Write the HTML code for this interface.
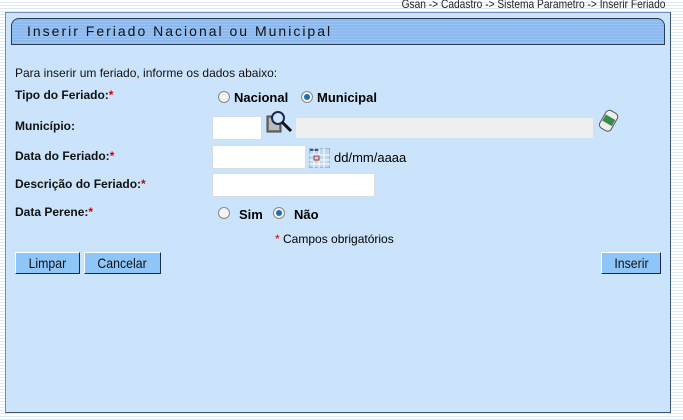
<!DOCTYPE html>
<html><head><style>
body{margin:0;width:683px;height:420px;overflow:hidden;font-family:"Liberation Sans",sans-serif;font-size:12px;
background:repeating-linear-gradient(to bottom,#fff 0,#fff 2px,#dce9f7 2px,#dce9f7 3px);position:relative}
.a{position:absolute}
.bc{right:18px;top:-3px;font-size:12px;color:#222;transform:scaleX(.85);transform-origin:right}
.panel{left:5px;top:12px;width:664px;height:399px;background:#cbe4fc;border:1px solid #6f8fb0;border-right-color:#3a5570;border-bottom-color:#3a5570}
.hdr{left:11px;top:18px;width:652px;height:25px;border:1px solid #2c3c50;border-radius:8px 8px 0 0;
background:repeating-linear-gradient(to bottom,#8cbaf0 0,#8cbaf0 2px,#9ac4f4 2px,#9ac4f4 3px)}
.hdr span{position:absolute;left:15px;top:4px;font-size:14px;letter-spacing:2px;color:#111}
.l{left:15px;font-weight:bold;color:#111}
.r{color:#c00}
.in{background:#fff;border:1px solid #d8dde3;border-radius:2px;height:22px}
.rad{width:10px;height:10px;border-radius:50%;border:1px solid #888;background:#f4f4f4}
.rad.on::after{content:"";position:absolute;left:2px;top:2px;width:6px;height:6px;border-radius:50%;background:#1a6fb0}
.btn{background:#8fc6fa;border:1px solid #fff;border-right-color:#1a2a4a;border-bottom-color:#1a2a4a;height:20px;line-height:20px;text-align:center;font-size:14px;color:#111}
.btn span{display:inline-block;transform:scaleX(.88)}
</style></head><body>
<div class="a bc">Gsan -&gt; Cadastro -&gt; Sistema Parametro -&gt; Inserir Feriado</div>
<div class="a panel"></div>
<div class="a hdr"><span>Inserir Feriado Nacional ou Municipal</span></div>
<div class="a" style="left:15px;top:66px;color:#111">Para inserir um feriado, informe os dados abaixo:</div>
<div class="a l" style="top:88px">Tipo do Feriado:<span class="r">*</span></div>
<div class="a rad" style="left:218px;top:91px"></div>
<div class="a" style="left:234px;top:90px;font-weight:bold;font-size:13px">Nacional</div>
<div class="a rad on" style="left:301px;top:91px"></div>
<div class="a" style="left:317px;top:90px;font-weight:bold;font-size:13px">Municipal</div>
<div class="a l" style="top:119px">Município:</div>
<div class="a in" style="left:212px;top:116px;width:48px"></div>
<svg class="a" style="left:266px;top:110px" width="27" height="26" viewBox="0 0 27 26"><rect x="1" y="6" width="14" height="16" fill="#777" stroke="#444"/><rect x="3" y="8" width="10" height="12" fill="#bbb"/><circle cx="12" cy="8" r="6" fill="#cfe4ff" stroke="#1a2a55" stroke-width="2"/><line x1="16" y1="12" x2="25" y2="21" stroke="#111" stroke-width="3"/></svg>
<div class="a" style="left:296px;top:118px;width:297px;height:20px;background:#efefef"></div>
<svg class="a" style="left:597px;top:109px" width="24" height="24" viewBox="0 0 24 24"><g transform="rotate(30 12 12)"><rect x="5" y="2" width="13" height="20" rx="4" fill="#eee" stroke="#555"/><rect x="6" y="8" width="11" height="7" fill="#3a8a4a"/></g></svg>
<div class="a l" style="top:149px">Data do Feriado:<span class="r">*</span></div>
<div class="a in" style="left:212px;top:145px;width:92px"></div>
<svg class="a" style="left:309px;top:148px" width="21" height="20"><rect x="0" y="0" width="21" height="20" fill="#bfd8ee" stroke="#7a9ab8"/><rect x="1" y="1" width="9" height="2" fill="#3355aa"/><path d="M0 7H21M0 12H21M0 16H21M5 0V20M10 0V20M15 0V20" stroke="#fff" stroke-width="1"/><rect x="5" y="8" width="5" height="4" fill="none" stroke="#a33"/></svg>
<div class="a" style="left:334px;top:150px;font-size:13px">dd/mm/aaaa</div>
<div class="a l" style="top:177px">Descrição do Feriado:<span class="r">*</span></div>
<div class="a in" style="left:212px;top:173px;width:161px"></div>
<div class="a l" style="top:205px">Data Perene:<span class="r">*</span></div>
<div class="a rad" style="left:218px;top:207px"></div>
<div class="a" style="left:239px;top:207px;font-weight:bold;font-size:13px">Sim</div>
<div class="a rad on" style="left:273px;top:207px"></div>
<div class="a" style="left:294px;top:207px;font-weight:bold;font-size:13px">Não</div>
<div class="a" style="left:275px;top:232px"><span class="r">*</span> Campos obrigatórios</div>
<div class="a btn" style="left:15px;top:252px;width:63px"><span>Limpar</span></div>
<div class="a btn" style="left:84px;top:252px;width:75px"><span>Cancelar</span></div>
<div class="a btn" style="left:601px;top:252px;width:58px"><span>Inserir</span></div>
</body></html>
